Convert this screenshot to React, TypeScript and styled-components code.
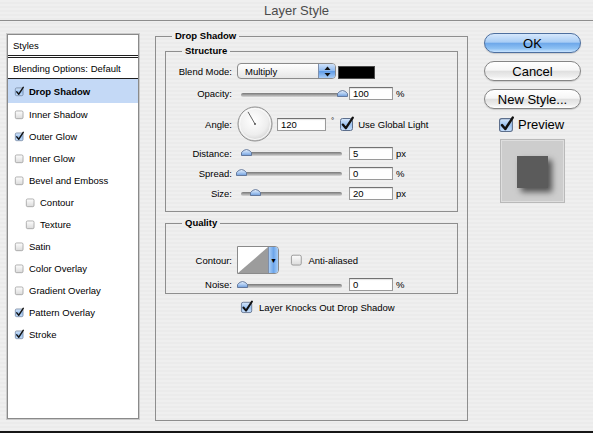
import React, { useId } from "react";
import styled, { createGlobalStyle } from "styled-components";

const GlobalStyle = createGlobalStyle`
  html, body { margin: 0; padding: 0; }
  body { background: #ececec; font-family: "Liberation Sans", Arial, sans-serif; }
  #root { width: 593px; height: 433px; }
`;

const stripes = `repeating-linear-gradient(to bottom, #efefef 0px, #efefef 2px, #ebebeb 2px, #ebebeb 4px)`;

const Window = styled.div`
  width: 593px;
  height: 433px;
  display: flex;
  flex-direction: column;
  background: ${stripes};
  overflow: hidden;
  font-family: "Liberation Sans", Arial, sans-serif;
  font-size: 9.5px;
  color: #000;
`;

const TitleBar = styled.div`
  height: 20px;
  flex: none;
  display: flex;
  align-items: center;
  justify-content: center;
  border-bottom: 1px solid #8e8e8e;
  border-radius: 5px 5px 0 0;
`;

const Title = styled.span`
  font-size: 13px;
  color: #4b4b4b;
`;

const Body = styled.div`
  flex: 1;
  display: flex;
  align-items: flex-start;
  padding-left: 7px;
`;

const BottomEdge = styled.div`
  height: 2px;
  flex: none;
  background: #161616;
`;

/* ---------- Left styles list ---------- */

const StylesPanel = styled.div`
  margin-top: 13px;
  width: 132px;
  height: 385px;
  box-sizing: border-box;
  background: #fff;
  border: 1px solid #8a8a8a;
  box-shadow: 0 0 0 1px #cacaca;
  display: flex;
  flex-direction: column;
`;

const PanelHeader = styled.div<{ $double?: boolean }>`
  height: 20px;
  flex: none;
  display: flex;
  align-items: center;
  padding-left: 5px;
  border-bottom: ${(p) => (p.$double ? "3px double #1e1e1e" : "1px solid #1e1e1e")};
`;

const StyleItem = styled.div<{ $selected?: boolean; $indent?: boolean; $h?: number }>`
  height: ${(p) => p.$h ?? 22}px;
  flex: none;
  display: flex;
  align-items: center;
  gap: 5px;
  padding-left: ${(p) => (p.$indent ? 18 : 7)}px;
  background: ${(p) => (p.$selected ? "#c4d9f6" : "transparent")};
  font-weight: ${(p) => (p.$selected ? "bold" : "normal")};
`;

/* ---------- Main group ---------- */

const MainGroup = styled.fieldset`
  margin: 9px 0 0 16px;
  width: 313px;
  height: 391px;
  box-sizing: border-box;
  border: 1px solid #8e8e8e;
  padding: 3px 9px 0 9px;
  min-inline-size: 0;
`;

const GroupLegend = styled.legend<{ $offset: number }>`
  margin-left: ${(p) => p.$offset}px;
  padding: 0 3px;
  font-weight: bold;
  font-size: 9.5px;
  line-height: 12px;
`;

const SubGroup = styled.fieldset<{ $pt: number; $pb: number; $mt?: number }>`
  margin: ${(p) => p.$mt ?? 0}px 0 0 0;
  padding: ${(p) => p.$pt}px 0 ${(p) => p.$pb}px 0;
  border: 1px solid #8e8e8e;
  min-inline-size: 0;
`;

const FieldRow = styled.div<{ $h: number; $mt?: number }>`
  height: ${(p) => p.$h}px;
  margin-top: ${(p) => p.$mt ?? 0}px;
  display: flex;
  align-items: center;
`;

const FieldLabel = styled.span`
  width: 66px;
  flex: none;
  text-align: right;
  margin-right: 5px;
`;

const SelectBox = styled.div`
  width: 99px;
  height: 16px;
  box-sizing: border-box;
  flex: none;
  display: flex;
  border: 1px solid #8b8b8b;
  border-radius: 4px;
  background: linear-gradient(#ffffff, #f3f3f3 50%, #e6e6e6);
  overflow: hidden;
`;

const SelectText = styled.span`
  flex: 1;
  padding-left: 7px;
  display: flex;
  align-items: center;
`;

const SelectStepper = styled.div`
  width: 16px;
  display: flex;
  align-items: center;
  justify-content: center;
  border-left: 1px solid #7d8fac;
  background: linear-gradient(#cfe2fa, #8fbaf0 48%, #5f9be6 52%, #a8ccf6);
`;

const ColorSwatch = styled.div`
  width: 37px;
  height: 13px;
  box-sizing: border-box;
  margin-left: 2px;
  margin-top: 2px;
  flex: none;
  background: #000;
  border: 1px solid #4a4a4a;
`;

const SliderBox = styled.div`
  position: relative;
  width: 108px;
  height: 12px;
  flex: none;
`;

const SliderTrack = styled.div`
  position: absolute;
  left: 4px;
  right: 3px;
  top: 5px;
  height: 4px;
  border-radius: 2px;
  background: linear-gradient(#777, #a9a9a9 55%, #d8d8d8);
`;

const SliderThumb = styled.svg`
  position: absolute;
  top: 1px;
  width: 11px;
  height: 8px;
  overflow: visible;
`;

const NumberInput = styled.div<{ $w?: number; $ml?: number }>`
  width: ${(p) => p.$w ?? 44}px;
  height: 13px;
  box-sizing: border-box;
  flex: none;
  margin-left: ${(p) => p.$ml ?? 4}px;
  padding-left: 3px;
  display: flex;
  align-items: center;
  background: #fff;
  border: 1px solid #9a9a9a;
  border-top-color: #727272;
  box-shadow: inset 0 1px 1px rgba(0, 0, 0, 0.12);
`;

const Unit = styled.span`
  margin-left: 3px;
`;

const Degree = styled.span`
  align-self: flex-start;
  margin-top: 11px;
  margin-left: 5px;
  font-size: 8px;
`;

const CheckLabel = styled.label<{ $gap: number; $ml?: number; $size?: number }>`
  display: flex;
  align-items: center;
  gap: ${(p) => p.$gap}px;
  margin-left: ${(p) => p.$ml ?? 0}px;
  font-size: ${(p) => p.$size ?? 9.5}px;
`;

const ContourButton = styled.div`
  display: flex;
  width: 42px;
  height: 28px;
  box-sizing: border-box;
  flex: none;
  border: 1px solid #8a8a8a;
  border-radius: 0 4px 4px 0;
  overflow: hidden;
  background: #fff;
`;

const ContourPreview = styled.svg`
  width: 30px;
  height: 26px;
  display: block;
`;

const ContourArrow = styled.div`
  flex: 1;
  display: flex;
  align-items: center;
  justify-content: center;
  border-left: 1px solid #7d8fac;
  background: linear-gradient(to right, #a9cdf6, #6ea6ea 50%, #a7cdf7);
  font-size: 7px;
`;

const KnockRow = styled.div`
  height: 20px;
  margin-top: 3px;
  padding-left: 76px;
  display: flex;
  align-items: center;
`;

/* ---------- Right column ---------- */

const ButtonColumn = styled.div`
  margin: 12px 0 0 16px;
  width: 97px;
  display: flex;
  flex-direction: column;
`;

const AquaButton = styled.button<{ $primary?: boolean }>`
  height: 20px;
  margin: 0 0 8px 0;
  padding: 0;
  border-radius: 10px;
  font-family: "Liberation Sans", Arial, sans-serif;
  font-size: 13px;
  color: #000;
  border: 1px solid ${(p) => (p.$primary ? "#4d6f9f" : "#858585")};
  background: ${(p) =>
    p.$primary
      ? "linear-gradient(#d6e8fc 0%, #a9cdf5 45%, #6ea8ea 52%, #8cc0f3 80%, #c9e4ff 100%)"
      : "linear-gradient(#ffffff 0%, #f6f6f6 45%, #e0e0e0 52%, #ededed 80%, #ffffff 100%)"};
  box-shadow: 0 1px 1px rgba(0, 0, 0, 0.15);
`;

const PreviewRow = styled.div`
  height: 18px;
  margin-top: -2px;
  padding-left: 15px;
  display: flex;
  align-items: center;
`;

const PreviewSwatch = styled.div`
  margin: 6px 0 0 16px;
  width: 65px;
  height: 64px;
  box-sizing: border-box;
  padding: 16px 0 0 16px;
  background: #cdcdcd;
  border: 1px solid #b9b9b9;
  box-shadow: inset 0 0 0 1px #dedede;
`;

const PreviewSquare = styled.div`
  width: 31px;
  height: 32px;
  background: #5b5b5b;
  box-shadow: 4px 4px 6px rgba(0, 0, 0, 0.6);
`;

/* ---------- Drawings ---------- */

function useSvgId(prefix: string) {
  return prefix + useId().replace(/[^a-zA-Z0-9]/g, "");
}

function CheckBox({ checked, size }: { checked: boolean; size: number }) {
  const id = useSvgId("cb");
  return (
    <svg width={size} height={size} viewBox="0 0 14 14" style={{ overflow: "visible", flex: "none" }}>
      <defs>
        <linearGradient id={id} x1="0" y1="0" x2="0" y2="1">
          {checked ? (
            <>
              <stop offset="0" stopColor="#d8e8fb" />
              <stop offset="0.5" stopColor="#9cc3f1" />
              <stop offset="1" stopColor="#c7defa" />
            </>
          ) : (
            <>
              <stop offset="0" stopColor="#fdfdfd" />
              <stop offset="0.5" stopColor="#ececec" />
              <stop offset="1" stopColor="#dadada" />
            </>
          )}
        </linearGradient>
      </defs>
      <rect x="0.5" y="1.5" width="12" height="12" rx="2" fill={`url(#${id})`} stroke={checked ? "#5d6f8c" : "#8c8c8c"} />
      {checked && (
        <path
          d="M2.8 7.6 L5.9 11.2 L12.8 0.6"
          fill="none"
          stroke="#111"
          strokeWidth="2.3"
          strokeLinecap="round"
          strokeLinejoin="round"
        />
      )}
    </svg>
  );
}

function Thumb({ frac }: { frac: number }) {
  const id = useSvgId("th");
  const left = 4 + frac * 101 - 5.5;
  return (
    <SliderThumb viewBox="0 0 11 8" style={{ left }}>
      <defs>
        <linearGradient id={id} x1="0" y1="0" x2="0" y2="1">
          <stop offset="0" stopColor="#e6f0fc" />
          <stop offset="0.55" stopColor="#a9c8f0" />
          <stop offset="1" stopColor="#6e9ddc" />
        </linearGradient>
      </defs>
      <path d="M0.5 7.5 L0.5 4.5 Q5.5 -1.5 10.5 4.5 L10.5 7.5 Z" fill={`url(#${id})`} stroke="#5c7296" strokeWidth="0.9" />
    </SliderThumb>
  );
}

function Slider({ frac }: { frac: number }) {
  return (
    <SliderBox>
      <SliderTrack />
      <Thumb frac={frac} />
    </SliderBox>
  );
}

function AngleDial({ angle }: { angle: number }) {
  const id = useSvgId("dl");
  const r = (angle * Math.PI) / 180;
  const x = 18 + Math.cos(r) * 14;
  const y = 18 - Math.sin(r) * 14;
  return (
    <svg width="36" height="36" viewBox="0 0 36 36" style={{ flex: "none" }}>
      <defs>
        <radialGradient id={id} cx="0.45" cy="0.4" r="0.6">
          <stop offset="0" stopColor="#ffffff" />
          <stop offset="0.7" stopColor="#eeeeee" />
          <stop offset="1" stopColor="#d4d4d4" />
        </radialGradient>
      </defs>
      <circle cx="18" cy="18" r="17" fill={`url(#${id})`} stroke="#8e8e8e" strokeWidth="1" />
      <circle cx="18" cy="18" r="15.5" fill="none" stroke="#ffffff" strokeWidth="1" opacity="0.8" />
      <line x1="18" y1="18" x2={x} y2={y} stroke="#555" strokeWidth="0.9" />
      <circle cx="18" cy="18" r="1" fill="#555" />
    </svg>
  );
}

function StepperArrows() {
  return (
    <svg width="7" height="11" viewBox="0 0 7 11">
      <path d="M3.5 0.5 L6.5 4 L0.5 4 Z" fill="#111" />
      <path d="M3.5 10.5 L6.5 7 L0.5 7 Z" fill="#111" />
    </svg>
  );
}

type SliderRowProps = { label: string; value: string; unit: string; frac: number; h: number };

function SliderRow({ label, value, unit, frac, h }: SliderRowProps) {
  return (
    <FieldRow $h={h}>
      <FieldLabel>{label}</FieldLabel>
      <Slider frac={frac} />
      <NumberInput>{value}</NumberInput>
      <Unit>{unit}</Unit>
    </FieldRow>
  );
}

const styleItems: { label: string; checked: boolean; indent?: boolean; selected?: boolean }[] = [
  { label: "Drop Shadow", checked: true, selected: true },
  { label: "Inner Shadow", checked: false },
  { label: "Outer Glow", checked: true },
  { label: "Inner Glow", checked: false },
  { label: "Bevel and Emboss", checked: false },
  { label: "Contour", checked: false, indent: true },
  { label: "Texture", checked: false, indent: true },
  { label: "Satin", checked: false },
  { label: "Color Overlay", checked: false },
  { label: "Gradient Overlay", checked: false },
  { label: "Pattern Overlay", checked: true },
  { label: "Stroke", checked: true },
];

export default function App() {
  return (
    <>
      <GlobalStyle />
      <Window>
        <TitleBar>
          <Title>Layer Style</Title>
        </TitleBar>
        <Body>
          <StylesPanel>
            <PanelHeader $double>Styles</PanelHeader>
            <PanelHeader>Blending Options: Default</PanelHeader>
            {styleItems.map((it) => (
              <StyleItem key={it.label} $selected={it.selected} $indent={it.indent} $h={it.selected ? 24 : 22}>
                <CheckBox checked={it.checked} size={9} />
                <span>{it.label}</span>
              </StyleItem>
            ))}
          </StylesPanel>

          <MainGroup>
            <GroupLegend $offset={7}>Drop Shadow</GroupLegend>

            <SubGroup $pt={3} $pb={8}>
              <GroupLegend $offset={16}>Structure</GroupLegend>
              <FieldRow $h={22}>
                <FieldLabel>Blend Mode:</FieldLabel>
                <SelectBox>
                  <SelectText>Multiply</SelectText>
                  <SelectStepper>
                    <StepperArrows />
                  </SelectStepper>
                </SelectBox>
                <ColorSwatch />
              </FieldRow>
              <SliderRow label="Opacity:" value="100" unit="%" frac={1} h={23} />
              <FieldRow $h={38}>
                <FieldLabel>Angle:</FieldLabel>
                <AngleDial angle={120} />
                <NumberInput $w={49} $ml={4}>120</NumberInput>
                <Degree>°</Degree>
                <CheckLabel $gap={4} $ml={6}>
                  <CheckBox checked size={14} />
                  <span>Use Global Light</span>
                </CheckLabel>
              </FieldRow>
              <SliderRow label="Distance:" value="5" unit="px" frac={0.05} h={20} />
              <SliderRow label="Spread:" value="0" unit="%" frac={0} h={20} />
              <SliderRow label="Size:" value="20" unit="px" frac={0.14} h={20} />
            </SubGroup>

            <SubGroup $pt={15} $pb={0} $mt={5}>
              <GroupLegend $offset={16}>Quality</GroupLegend>
              <FieldRow $h={32}>
                <FieldLabel>Contour:</FieldLabel>
                <ContourButton>
                  <ContourPreview viewBox="0 0 30 26">
                    <path d="M0 26 L30 0 L30 26 Z" fill="#9c9c9c" />
                  </ContourPreview>
                  <ContourArrow>▼</ContourArrow>
                </ContourButton>
                <CheckLabel $gap={6} $ml={12}>
                  <CheckBox checked={false} size={11.5} />
                  <span>Anti-aliased</span>
                </CheckLabel>
              </FieldRow>
              <SliderRow label="Noise:" value="0" unit="%" frac={0.01} h={17} />
            </SubGroup>

            <KnockRow>
              <CheckLabel $gap={6}>
                <CheckBox checked size={12} />
                <span>Layer Knocks Out Drop Shadow</span>
              </CheckLabel>
            </KnockRow>
          </MainGroup>

          <ButtonColumn>
            <AquaButton $primary>OK</AquaButton>
            <AquaButton>Cancel</AquaButton>
            <AquaButton>New Style...</AquaButton>
            <PreviewRow>
              <CheckLabel $gap={4} $size={13}>
                <CheckBox checked size={15} />
                <span>Preview</span>
              </CheckLabel>
            </PreviewRow>
            <PreviewSwatch>
              <PreviewSquare />
            </PreviewSwatch>
          </ButtonColumn>
        </Body>
        <BottomEdge />
      </Window>
    </>
  );
}
